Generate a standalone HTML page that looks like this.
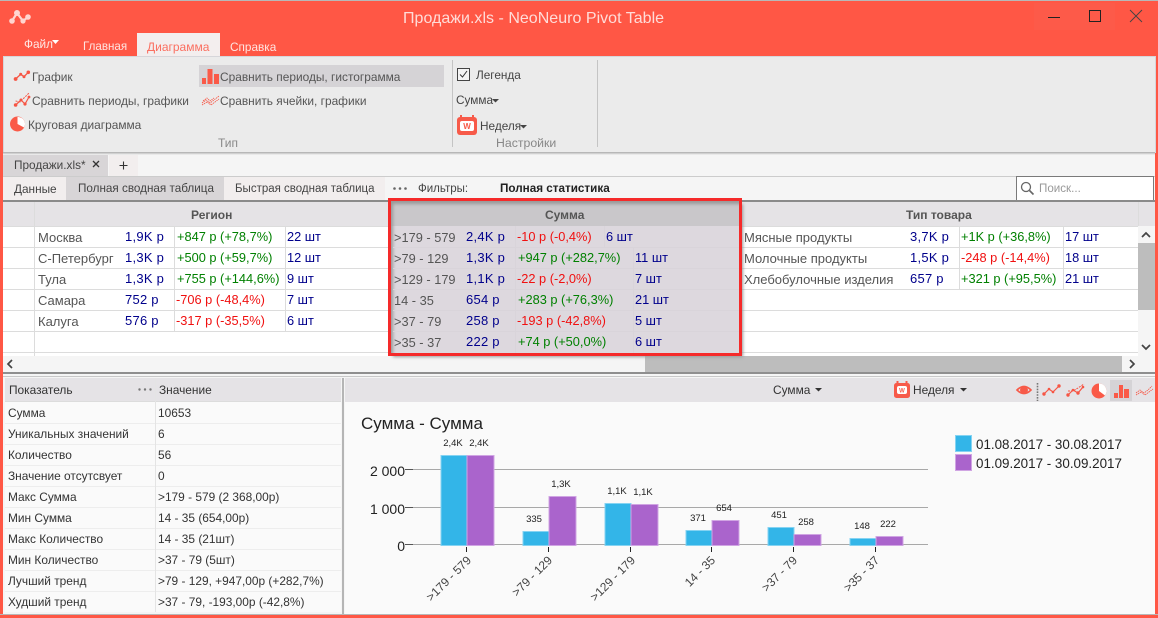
<!DOCTYPE html>
<html><head><meta charset="utf-8"><style>
html,body{margin:0;padding:0}
body{width:1158px;height:618px;position:relative;overflow:hidden;background:#ff5745;font:12px/16px "Liberation Sans","Noto Sans CJK SC",sans-serif;color:#444}
.b{position:absolute}
.t{position:absolute;white-space:nowrap;height:16px;line-height:16px}
.g{color:#555;font-size:13px;transform:translateY(1px)}
.v{color:#00008b;font-size:13px;letter-spacing:.25px;transform:translateY(1px)}
.c{color:#00008b;font-size:12.800px;transform:translateY(1px)}
.p{color:#008000;font-size:12.800px;transform:translateY(1px)}
.m{color:#f01010;font-size:12.800px;transform:translateY(1px)}
.d{color:#333;font-size:11.900px}
.r{color:#555;font-size:11.900px}
.h{position:absolute;height:1px;background:#dcdcdc}
.w{position:absolute;width:1px;background:#dcdcdc}
svg{position:absolute;overflow:visible}
</style></head><body>
<div class="b" style="left:0;top:0;width:1158px;height:1px;background:#b8b8b8"></div>
<svg style="left:0;top:0" width="40" height="30"><polyline points="12,21 17,13 23,21 28,17" fill="none" stroke="#ffd5cf" stroke-width="2.200"/><circle cx="12" cy="21" r="2.800" fill="#ffd5cf"/><circle cx="17" cy="13" r="3" fill="#ffd5cf"/><circle cx="23" cy="21" r="2.600" fill="#ffd5cf"/><circle cx="28" cy="17" r="2.800" fill="#ffd5cf"/></svg>
<div class="t" style="left:403px;top:11px;font-size:16px;color:#ffdcd8;letter-spacing:.02px">Продажи.xls - NeoNeuro Pivot Table</div>
<div class="b" style="left:1034px;top:3px;width:41px;height:27px;background:#fd5a49"></div>
<div class="b" style="left:1075px;top:3px;width:40px;height:27px;background:#fd5a49"></div>
<svg style="left:1040px;top:4px" width="110" height="24"><path d="M8 13.500H20" stroke="#222" stroke-width="1"/><rect x="49.500" y="6.500" width="11" height="11" fill="none" stroke="#222"/><path d="M90 6L102 18M102 6L90 18" stroke="#444" stroke-width=".9"/></svg>
<div class="t" style="left:24px;top:36px;color:#ffe8e5;font-size:11.800px">Файл</div>
<svg style="left:52px;top:40px" width="8" height="4"><path d="M0 0H7L3.500 4Z" fill="#fff"/></svg>
<div class="t" style="left:83px;top:39px;color:#ffe5e1;font-size:11.600px">Главная</div>
<div class="b" style="left:137px;top:33px;width:83px;height:24px;background:#f3eeee"></div>
<div class="t" style="left:147px;top:39px;color:#fb6f60;font-size:12px">Диаграмма</div>
<div class="t" style="left:230px;top:39px;color:#ffe5e1;font-size:11.800px">Справка</div>
<!-- ribbon -->
<div class="b" style="left:3px;top:56px;width:1151px;height:95px;background:#ebebeb;border:1px solid #d6d6da"></div>
<div class="b" style="left:199px;top:65px;width:245px;height:22px;background:#d5d3d6"></div>
<div class="b" style="left:452px;top:60px;width:1px;height:87px;background:#c4c4c4"></div>
<div class="b" style="left:597px;top:60px;width:1px;height:87px;background:#c4c4c4"></div>
<svg style="left:0;top:60px" width="34" height="80">
<polyline points="15.600,19 20.700,14.300 24,16.700 28.300,12.300" fill="none" stroke="#f65544" stroke-width="1.300"/><circle cx="15.600" cy="19" r="1.900" fill="#f65544"/><circle cx="20.700" cy="14.300" r="1.500" fill="#f65544"/><circle cx="24" cy="16.700" r="1.500" fill="#f65544"/><circle cx="28.300" cy="12.300" r="1.800" fill="#f65544"/>
<polyline points="15.600,45 21,40 25,44 29,37" fill="none" stroke="#f65544" stroke-width="1.200"/><polyline points="15.600,41 20,42 24,38 29,33" fill="none" stroke="#f65544" stroke-width="1" stroke-dasharray="2 1"/><circle cx="15.600" cy="45" r="1.800" fill="#f65544"/><circle cx="21" cy="40" r="1.500" fill="#f65544"/><circle cx="25" cy="44" r="1.600" fill="#f65544"/><circle cx="29" cy="37" r="1.400" fill="#f65544"/>
<circle cx="17.500" cy="64" r="7.500" fill="#fa5a48"/><path d="M17.500 64V57A7 7 0 0 1 24 67.500Z" fill="#fff"/>
</svg>
<div class="t r" style="left:32px;top:69px">График</div>
<div class="t r" style="left:32px;top:93px">Сравнить периоды, графики</div>
<div class="t r" style="left:28px;top:117px">Круговая диаграмма</div>
<svg style="left:202px;top:68px" width="17" height="16"><rect x="0" y="10" width="4" height="6" fill="#fa5a48"/><rect x="5.500" y="1" width="5" height="15" fill="#fa5a48"/><rect x="12" y="6" width="5" height="10" fill="#fa5a48"/></svg>
<div class="t r" style="left:220px;top:69px">Сравнить периоды, гистограмма</div>
<svg style="left:202px;top:95px" width="18" height="12"><path d="M0 8L4 5L8 8L12 5L17 1M0 10L5 7L9 10L13 7L17 4M1 6L5 3L8 6L12 3" fill="none" stroke="#f65544" stroke-width=".8" stroke-dasharray="1.500 .7"/></svg>
<div class="t r" style="left:220px;top:93px">Сравнить ячейки, графики</div>
<div class="t" style="left:218px;top:135px;color:#888">Тип</div>
<div class="b" style="left:457px;top:68px;width:11px;height:11px;border:1px solid #444;background:#f4f4f4"></div>
<svg style="left:457px;top:68px" width="13" height="13"><path d="M3 6.500L5.500 9L10 3" fill="none" stroke="#333" stroke-width="1"/></svg>
<div class="t" style="left:476px;top:67px;color:#444;font-size:11.800px">Легенда</div>
<div class="t" style="left:456px;top:92px;color:#444;font-size:11.800px">Сумма</div>
<svg style="left:492px;top:99px" width="7" height="4"><path d="M0 0H7L3.500 3.500Z" fill="#444"/></svg>
<svg style="left:457px;top:115px" width="20" height="20"><rect x="0" y="2" width="20" height="18" rx="3" fill="#f75a49"/><rect x="3" y="0" width="2" height="4" fill="#f75a49"/><rect x="15" y="0" width="2" height="4" fill="#f75a49"/><rect x="3" y="6" width="14" height="10" rx="2" fill="#fff"/><text x="10" y="14" text-anchor="middle" font-size="8" font-weight="bold" fill="#f75a49" font-family="Liberation Sans">W</text></svg>
<div class="t" style="left:480px;top:118px;color:#444;font-size:11.800px">Неделя</div>
<svg style="left:520px;top:125px" width="7" height="4"><path d="M0 0H7L3.500 3.500Z" fill="#444"/></svg>
<div class="t" style="left:496px;top:135px;color:#888;font-size:12.300px">Настройки</div>
<!-- tab strip -->
<div class="b" style="left:3px;top:152px;width:1152px;height:48px;background:#f5f5f5"></div>
<div class="b" style="left:3px;top:152px;width:1152px;height:3px;background:linear-gradient(#aaa,#f5f5f5)"></div>
<div class="b" style="left:3px;top:155px;width:105px;height:21px;background:#d8d5d7"></div>
<div class="t" style="left:14px;top:157px;color:#444;font-size:11.800px">Продажи.xls*</div>
<svg style="left:92px;top:160px" width="8" height="8"><path d="M1 1L7 7M7 1L1 7" stroke="#333" stroke-width="1.300"/></svg>
<div class="b" style="left:109px;top:155px;width:29px;height:21px;background:#f2eeee"></div>
<svg style="left:119px;top:161px" width="10" height="10"><path d="M4.500 .5V8.500M.5 4.500H8.500" stroke="#333" stroke-width="1.100"/></svg>
<div class="b" style="left:3px;top:176px;width:1152px;height:1px;background:#ccc"></div>
<div class="b" style="left:3px;top:177px;width:63px;height:23px;background:#f2eeee"></div>
<div class="b" style="left:66px;top:177px;width:158px;height:23px;background:#d8d5d7"></div>
<div class="b" style="left:224px;top:177px;width:161px;height:23px;background:#f2eeee"></div>
<div class="t" style="left:14px;top:181px;color:#444;font-size:11.800px">Данные</div>
<div class="t" style="left:78px;top:181px;color:#444;font-size:11.700px">Полная сводная таблица</div>
<div class="t" style="left:235px;top:181px;color:#444;font-size:11.500px">Быстрая сводная таблица</div>
<svg style="left:393px;top:187px" width="16" height="3"><circle cx="1.500" cy="1.500" r="1.300" fill="#666"/><circle cx="7" cy="1.500" r="1.300" fill="#666"/><circle cx="12.500" cy="1.500" r="1.300" fill="#666"/></svg>
<div class="t" style="left:418px;top:181px;color:#444;font-size:11.500px">Фильтры:</div>
<div class="t" style="left:500px;top:181px;color:#222;font-weight:bold;font-size:11.700px">Полная статистика</div>
<div class="b" style="left:1016px;top:176px;width:136px;height:23px;background:#fff;border:1px solid #7a7a7a"></div>
<svg style="left:1020px;top:181px" width="15" height="15"><circle cx="6" cy="6" r="4.500" fill="none" stroke="#666" stroke-width="1.300"/><path d="M9.500 9.500L13.500 13.500" stroke="#666" stroke-width="1.600"/></svg>
<div class="t" style="left:1039px;top:181px;color:#999;font-size:11.600px">Поиск...</div>
<div class="b" style="left:3px;top:200px;width:1152px;height:2px;background:#8a8a8a"></div>
<!-- grid -->
<div class="b" style="left:3px;top:202px;width:1152px;height:154px;background:#fff"></div>
<div class="b" style="left:3px;top:202px;width:1152px;height:24px;background:#e5e3e6"></div>
<div class="h" style="left:3px;top:226px;width:1135px"></div>
<div class="h" style="left:3px;top:247px;width:1135px"></div>
<div class="h" style="left:3px;top:268px;width:1135px"></div>
<div class="h" style="left:3px;top:289px;width:1135px"></div>
<div class="h" style="left:3px;top:310px;width:1135px"></div>
<div class="h" style="left:3px;top:331px;width:1135px"></div>
<div class="h" style="left:3px;top:352px;width:1135px"></div>
<div class="w" style="left:34px;top:202px;height:154px"></div>
<div class="w" style="left:174px;top:226px;height:105px"></div>
<div class="w" style="left:285px;top:226px;height:105px"></div>
<div class="w" style="left:959px;top:226px;height:63px"></div>
<div class="w" style="left:1063px;top:226px;height:63px"></div>
<div class="w" style="left:1138px;top:202px;height:24px"></div>
<div class="t" style="left:191px;top:207px;font-weight:bold;color:#555">Регион</div>
<div class="t" style="left:906px;top:207px;font-weight:bold;color:#555">Тип товара</div>
<div class="t g" style="left:38px;top:229px">Москва</div><div class="t v" style="left:125px;top:228px">1,9K р</div><div class="t p" style="left:177px;top:228px">+847 р (+78,7%)</div><div class="t c" style="left:287px;top:228px">22 шт</div>
<div class="t g" style="left:38px;top:250px">С-Петербург</div><div class="t v" style="left:125px;top:249px">1,3K р</div><div class="t p" style="left:177px;top:249px">+500 р (+59,7%)</div><div class="t c" style="left:287px;top:249px">12 шт</div>
<div class="t g" style="left:38px;top:271px">Тула</div><div class="t v" style="left:125px;top:270px">1,3K р</div><div class="t p" style="left:177px;top:270px">+755 р (+144,6%)</div><div class="t c" style="left:287px;top:270px">9 шт</div>
<div class="t g" style="left:38px;top:292px">Самара</div><div class="t v" style="left:125px;top:291px">752 р</div><div class="t m" style="left:176px;top:291px">-706 р (-48,4%)</div><div class="t c" style="left:287px;top:291px">7 шт</div>
<div class="t g" style="left:38px;top:313px">Калуга</div><div class="t v" style="left:125px;top:312px">576 р</div><div class="t m" style="left:176px;top:312px">-317 р (-35,5%)</div><div class="t c" style="left:287px;top:312px">6 шт</div>
<div class="t g" style="left:744px;top:229px">Мясные продукты</div><div class="t v" style="left:910px;top:228px">3,7K р</div><div class="t p" style="left:961px;top:228px">+1K р (+36,8%)</div><div class="t c" style="left:1065px;top:228px">17 шт</div>
<div class="t g" style="left:744px;top:250px">Молочные продукты</div><div class="t v" style="left:910px;top:249px">1,5K р</div><div class="t m" style="left:961px;top:249px">-248 р (-14,4%)</div><div class="t c" style="left:1065px;top:249px">18 шт</div>
<div class="t g" style="left:744px;top:271px">Хлебобулочные изделия</div><div class="t v" style="left:910px;top:270px">657 р</div><div class="t p" style="left:961px;top:270px">+321 р (+95,5%)</div><div class="t c" style="left:1065px;top:270px">21 шт</div>
<!-- scrollbars -->
<div class="b" style="left:3px;top:356px;width:1152px;height:16px;background:#f5f5f5"></div>
<div class="b" style="left:645px;top:356px;width:477px;height:16px;background:#bdbdbd"></div>
<svg style="left:7px;top:359px" width="1148" height="10"><path d="M5 1L1 5L5 9" fill="none" stroke="#444" stroke-width="1.700"/><path d="M1123 1L1127 5L1123 9" fill="none" stroke="#444" stroke-width="1.700"/></svg>
<div class="b" style="left:1138px;top:226px;width:17px;height:130px;background:#f5f5f5"></div>
<div class="b" style="left:1138px;top:243px;width:17px;height:67px;background:#bdbdbd"></div>
<svg style="left:1141px;top:231px" width="12" height="120"><path d="M1 6L5 2L9 6" fill="none" stroke="#444" stroke-width="1.700"/><path d="M1 114L5 118L9 114" fill="none" stroke="#444" stroke-width="1.700"/></svg>
<!-- highlight -->
<div class="b" style="left:390px;top:201px;width:350px;height:153px;background:#ddd8de;box-shadow:3px 3px 3px #999"></div>
<div class="b" style="left:390px;top:201px;width:350px;height:25px;background:#c9c7ca"></div>
<div class="b" style="left:390px;top:201px;width:350px;height:153px;box-shadow:inset 3px 3px 3px #999"></div>
<div class="h" style="left:393px;top:247px;width:347px;background:#d9d4da"></div><div class="h" style="left:393px;top:268px;width:347px;background:#d9d4da"></div><div class="h" style="left:393px;top:289px;width:347px;background:#d9d4da"></div><div class="h" style="left:393px;top:310px;width:347px;background:#d9d4da"></div><div class="h" style="left:393px;top:331px;width:347px;background:#d9d4da"></div>
<div class="w" style="left:515px;top:226px;height:128px;background:#d9d4da"></div><div class="w" style="left:633px;top:247px;height:107px;background:#d9d4da"></div><div class="w" style="left:604px;top:226px;height:21px;background:#d9d4da"></div>
<div class="t" style="left:545px;top:207px;font-weight:bold;color:#555">Сумма</div>
<div class="t g" style="left:394px;top:229px;font-size:12.800px">&gt;179 - 579</div><div class="t v" style="left:466px;top:228px">2,4K р</div><div class="t m" style="left:517px;top:228px">-10 р (-0,4%)</div><div class="t c" style="left:606px;top:228px">6 шт</div>
<div class="t g" style="left:394px;top:250px;font-size:12.800px">&gt;79 - 129</div><div class="t v" style="left:466px;top:249px">1,3K р</div><div class="t p" style="left:518px;top:249px">+947 р (+282,7%)</div><div class="t c" style="left:635px;top:249px">11 шт</div>
<div class="t g" style="left:394px;top:271px;font-size:12.800px">&gt;129 - 179</div><div class="t v" style="left:466px;top:270px">1,1K р</div><div class="t m" style="left:517px;top:270px">-22 р (-2,0%)</div><div class="t c" style="left:635px;top:270px">7 шт</div>
<div class="t g" style="left:394px;top:292px;font-size:12.800px">14 - 35</div><div class="t v" style="left:466px;top:291px">654 р</div><div class="t p" style="left:518px;top:291px">+283 р (+76,3%)</div><div class="t c" style="left:635px;top:291px">21 шт</div>
<div class="t g" style="left:394px;top:313px;font-size:12.800px">&gt;37 - 79</div><div class="t v" style="left:466px;top:312px">258 р</div><div class="t m" style="left:517px;top:312px">-193 р (-42,8%)</div><div class="t c" style="left:635px;top:312px">5 шт</div>
<div class="t g" style="left:394px;top:334px;font-size:12.800px">&gt;35 - 37</div><div class="t v" style="left:466px;top:333px">222 р</div><div class="t p" style="left:518px;top:333px">+74 р (+50,0%)</div><div class="t c" style="left:635px;top:333px">6 шт</div>
<div class="b" style="left:388px;top:198px;width:348px;height:152px;border:3px solid #f52a2a"></div>
<!-- splitter -->
<div class="b" style="left:3px;top:372px;width:1152px;height:242px;background:#f5f5f5"></div>
<div class="b" style="left:3px;top:372px;width:1152px;height:2px;background:#8f8f8f"></div>
<div class="b" style="left:3px;top:376px;width:1152px;height:1px;background:#c8c8c8"></div>
<!-- bottom left -->
<div class="b" style="left:5px;top:378px;width:336px;height:23px;background:#e5e3e6"></div>
<div class="b" style="left:5px;top:401px;width:336px;height:211px;background:#fafafa"></div>
<div class="h" style="left:5px;top:401px;width:336px"></div><div class="h" style="left:5px;top:423px;width:336px;background:#ededed"></div><div class="h" style="left:5px;top:444px;width:336px;background:#ededed"></div><div class="h" style="left:5px;top:465px;width:336px;background:#ededed"></div><div class="h" style="left:5px;top:486px;width:336px;background:#ededed"></div><div class="h" style="left:5px;top:507px;width:336px;background:#ededed"></div><div class="h" style="left:5px;top:528px;width:336px;background:#ededed"></div><div class="h" style="left:5px;top:549px;width:336px;background:#ededed"></div><div class="h" style="left:5px;top:570px;width:336px;background:#ededed"></div><div class="h" style="left:5px;top:591px;width:336px;background:#ededed"></div>
<div class="w" style="left:155px;top:378px;height:234px;background:#e4e4e4"></div>
<div class="b" style="left:342px;top:378px;width:2px;height:236px;background:#b5b5b5"></div>
<div class="t d" style="left:9px;top:382px">Показатель</div>
<svg style="left:138px;top:388px" width="16" height="3"><circle cx="1.500" cy="1.500" r="1.200" fill="#777"/><circle cx="7" cy="1.500" r="1.200" fill="#777"/><circle cx="12.500" cy="1.500" r="1.200" fill="#777"/></svg>
<div class="t d" style="left:159px;top:382px">Значение</div>
<div class="t d" style="left:8px;top:405px">Сумма</div><div class="t d" style="left:158px;top:405px">10653</div>
<div class="t d" style="left:8px;top:426px">Уникальных значений</div><div class="t d" style="left:158px;top:426px">6</div>
<div class="t d" style="left:8px;top:447px">Количество</div><div class="t d" style="left:158px;top:447px">56</div>
<div class="t d" style="left:8px;top:468px">Значение отсутсвует</div><div class="t d" style="left:158px;top:468px">0</div>
<div class="t d" style="left:8px;top:489px">Макс Сумма</div><div class="t d" style="left:158px;top:489px">&gt;179 - 579 (2 368,00р)</div>
<div class="t d" style="left:8px;top:510px">Мин Сумма</div><div class="t d" style="left:158px;top:510px">14 - 35 (654,00р)</div>
<div class="t d" style="left:8px;top:531px">Макс Количество</div><div class="t d" style="left:158px;top:531px">14 - 35 (21шт)</div>
<div class="t d" style="left:8px;top:552px">Мин Количество</div><div class="t d" style="left:158px;top:552px">&gt;37 - 79 (5шт)</div>
<div class="t d" style="left:8px;top:573px">Лучший тренд</div><div class="t d" style="left:158px;top:573px">&gt;79 - 129, +947,00р (+282,7%)</div>
<div class="t d" style="left:8px;top:594px">Худший тренд</div><div class="t d" style="left:158px;top:594px">&gt;37 - 79, -193,00р (-42,8%)</div>
<!-- bottom right -->
<div class="b" style="left:345px;top:378px;width:810px;height:24px;background:#e5e3e6"></div>
<div class="b" style="left:345px;top:402px;width:810px;height:212px;background:#fafafa"></div>
<div class="t d" style="left:773px;top:382px">Сумма</div>
<svg style="left:815px;top:388px" width="7" height="4"><path d="M0 0H7L3.500 3.500Z" fill="#333"/></svg>
<svg style="left:894px;top:381px" width="16" height="17"><rect x="0" y="2" width="16" height="15" rx="2.500" fill="#f75a49"/><rect x="2.500" y="0" width="2" height="3" fill="#f75a49"/><rect x="11.500" y="0" width="2" height="3" fill="#f75a49"/><rect x="3" y="5" width="10" height="8" rx="2" fill="#fff"/><text x="8" y="11.500" text-anchor="middle" font-size="6" font-weight="bold" fill="#f75a49" font-family="Liberation Sans">W</text></svg>
<div class="t d" style="left:913px;top:382px">Неделя</div>
<svg style="left:960px;top:388px" width="7" height="4"><path d="M0 0H7L3.500 3.500Z" fill="#333"/></svg>
<svg style="left:1016px;top:380px" width="140" height="22">
<path d="M1 10Q8 3 15 10Q8 17 1 10Z" fill="none" stroke="#f75a49" stroke-width="1.600"/><ellipse cx="8" cy="10" rx="4" ry="3.500" fill="#f75a49"/>
<path d="M21.500 3V21" stroke="#777" stroke-width="1.600" stroke-dasharray="1.600 1.200"/>
<polyline points="28,14 33,9 37,12 43,6" fill="none" stroke="#f65544" stroke-width="1.200"/><circle cx="28" cy="14" r="1.700" fill="#f65544"/><circle cx="33" cy="9" r="1.300" fill="#f65544"/><circle cx="37" cy="12" r="1.300" fill="#f65544"/><circle cx="43" cy="6" r="1.700" fill="#f65544"/>
<polyline points="52,15 57,10 62,13 67,7" fill="none" stroke="#f65544" stroke-width="1.200"/><polyline points="52,11 57,11 62,8 68,4" fill="none" stroke="#f65544" stroke-dasharray="2 1"/><circle cx="52" cy="15" r="1.700" fill="#f65544"/><circle cx="62" cy="13" r="1.700" fill="#f65544"/><circle cx="57" cy="10" r="1.300" fill="#f65544"/><circle cx="67" cy="7" r="1.300" fill="#f65544"/>
<circle cx="83" cy="11" r="7.500" fill="#fa5a48"/><path d="M83 11V3.500A7.500 7.500 0 0 1 89 15.500Z" fill="#fff"/>
<rect x="94" y="0" width="22" height="21" fill="#d5d3d6"/><rect x="98" y="13" width="4" height="5" fill="#fa5a48"/><rect x="103" y="5" width="4" height="13" fill="#fa5a48"/><rect x="108" y="9" width="5" height="9" fill="#fa5a48"/>
<path d="M120 13L124 10L128 13L132 10L136 6M120 15L125 12L129 15L133 12L137 9" fill="none" stroke="#f65544" stroke-width=".8" stroke-dasharray="1.500 .7"/>
</svg>
<div class="t" style="left:361px;top:416px;font-size:17px;color:#222">Сумма - Сумма</div>
<svg style="left:0;top:0" width="1158" height="618" font-family="Liberation Sans">
<g stroke="#a8a8a8" stroke-width="1"><path d="M413 469.500H928M413 507.500H928M413 544.500H928"/></g>
<g stroke="#555"><path d="M405 469.500H413M405 507.500H413M405 544.500H413"/></g>
<g fill="#33b5e8" stroke="#85d3f2"><rect x="441" y="455.500" width="26" height="90"/><rect x="523" y="531.500" width="26" height="14"/><rect x="605" y="503.500" width="26" height="42"/><rect x="686" y="530.500" width="26" height="15"/><rect x="768" y="527.500" width="26" height="18"/><rect x="850" y="538.500" width="26" height="7"/></g>
<g fill="#aa64cc" stroke="#d0a5e3"><rect x="467" y="455.500" width="27" height="90"/><rect x="549" y="496.500" width="27" height="49"/><rect x="631" y="504.500" width="27" height="41"/><rect x="712" y="520.500" width="27" height="25"/><rect x="794" y="534.500" width="27" height="11"/><rect x="876" y="536.500" width="27" height="9"/></g>
<path d="M466.500 547V552M548.500 547V552M630.500 547V552M711.500 547V552M793.500 547V552M875.500 547V552" stroke="#222"/>
<g font-size="14" fill="#222" text-anchor="end"><text x="405" y="476">2 000</text><text x="405" y="514">1 000</text><text x="405" y="551">0</text></g>
<g font-size="9.500" fill="#222" text-anchor="middle"><text x="453" y="446">2,4K</text><text x="479" y="446">2,4K</text><text x="534" y="522">335</text><text x="561" y="487">1,3K</text><text x="617" y="494">1,1K</text><text x="643" y="495">1,1K</text><text x="698" y="521">371</text><text x="724" y="511">654</text><text x="779" y="518">451</text><text x="806" y="525">258</text><text x="862" y="529">148</text><text x="888" y="527">222</text></g>
<g font-size="12" fill="#444" text-anchor="end"><text transform="translate(472,561) rotate(-45)">&gt;179 - 579</text><text transform="translate(553,561) rotate(-45)">&gt;79 - 129</text><text transform="translate(636,561) rotate(-45)">&gt;129 - 179</text><text transform="translate(716,561) rotate(-45)">14 - 35</text><text transform="translate(798,561) rotate(-45)">&gt;37 - 79</text><text transform="translate(880,561) rotate(-45)">&gt;35 - 37</text></g>
<rect x="955.500" y="435.500" width="16" height="16" fill="#33b5e8" stroke="#85d3f2"/><rect x="955.500" y="454.500" width="16" height="16" fill="#aa64cc" stroke="#d0a5e3"/>
<text x="976" y="449" font-size="13.400" fill="#222">01.08.2017 - 30.08.2017</text><text x="976" y="468" font-size="13.400" fill="#222">01.09.2017 - 30.09.2017</text>
</svg>
<div class="b" style="left:0;top:614px;width:1158px;height:1px;background:#b8b8b8"></div>
</body></html>
